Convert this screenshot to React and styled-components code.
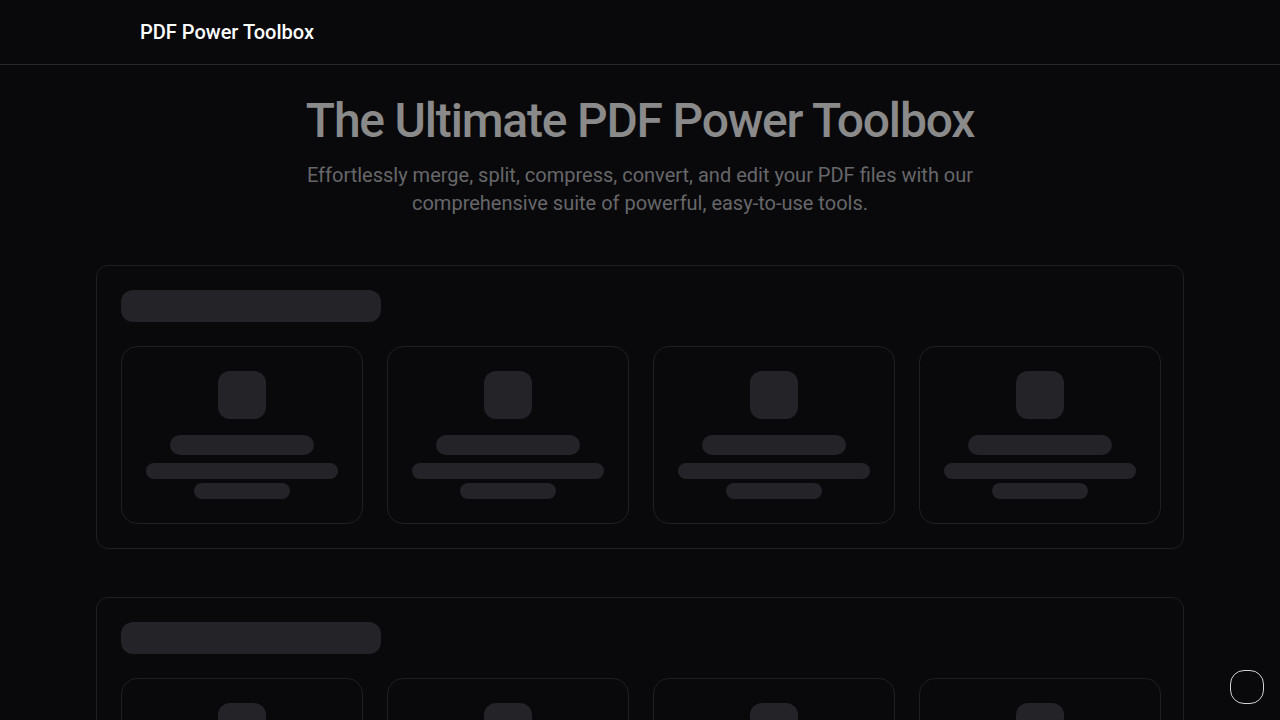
import React from 'react';
import styled, { createGlobalStyle } from 'styled-components';

const GlobalStyle = createGlobalStyle`
  * { box-sizing: border-box; }
  body {
    margin: 0;
    background: #09090b;
    color: #fafafa;
    font-family: Roboto, "Liberation Sans", sans-serif;
  }
`;

const sections = [0, 1, 2];
const tools = [0, 1, 2, 3];

export default function App() {
  return (
    <>
      <GlobalStyle />
      <Page>
        <Header>
          <HeaderInner>
            <Brand>PDF Power Toolbox</Brand>
          </HeaderInner>
        </Header>
        <Main>
          <Hero>
            <Title>The Ultimate PDF Power Toolbox</Title>
            <Lead>
              Effortlessly merge, split, compress, convert, and edit your PDF files with our
              comprehensive suite of powerful, easy-to-use tools.
            </Lead>
          </Hero>
          <Sections>
            {sections.map((s) => (
              <Section key={s}>
                <Skeleton w={260} h={32} r={12} />
                <Grid>
                  {tools.map((t) => (
                    <ToolCard key={t}>
                      <Skeleton w={48} h={48} r={12} />
                      <Skeleton w={144} h={20} r={999} mt={16} />
                      <Skeleton w={192} h={16} r={999} mt={8} />
                      <Skeleton w={96} h={16} r={999} mt={4} />
                    </ToolCard>
                  ))}
                </Grid>
              </Section>
            ))}
          </Sections>
        </Main>
        <FloatButton aria-label="help" />
      </Page>
    </>
  );
}

const Page = styled.div`
  min-height: 100vh;
  background: #09090b;
`;

const Header = styled.header`
  height: 65px;
  border-bottom: 1px solid #27272a;
`;

const HeaderInner = styled.div`
  max-width: 1000px;
  margin: 0 auto;
  height: 100%;
  display: flex;
  align-items: center;
`;

const Brand = styled.div`
  font-size: 20px;
  font-weight: 500;
  color: #ffffff;
`;

const Main = styled.main`
  max-width: 1088px;
  margin: 0 auto;
  padding-top: 28px;
`;

const Hero = styled.section`
  display: flex;
  flex-direction: column;
  align-items: center;
  text-align: center;
  margin-bottom: 48px;
`;

const Title = styled.h1`
  margin: 0;
  font-size: 48px;
  line-height: 56px;
  font-weight: 500;
  letter-spacing: -1.2px;
  color: #8a8a8b;
`;

const Lead = styled.p`
  margin: 12px 0 0;
  max-width: 680px;
  font-size: 20px;
  line-height: 28px;
  color: #67676a;
`;

const Sections = styled.div`
  display: flex;
  flex-direction: column;
  gap: 48px;
`;

const Section = styled.section`
  border: 1px solid #1f1f23;
  border-radius: 12px;
  padding: 24px;
  display: flex;
  flex-direction: column;
  gap: 24px;
`;

const Grid = styled.div`
  display: grid;
  grid-template-columns: repeat(4, 1fr);
  gap: 24px;
`;

const ToolCard = styled.div`
  border: 1px solid #1f1f23;
  border-radius: 16px;
  padding: 24px;
  display: flex;
  flex-direction: column;
  align-items: center;
`;

const Skeleton = styled.div`
  width: ${(p) => p.w}px;
  height: ${(p) => p.h}px;
  border-radius: ${(p) => p.r}px;
  margin-top: ${(p) => p.mt || 0}px;
  background: #242428;
  flex-shrink: 0;
`;

const FloatButton = styled.button`
  position: fixed;
  right: 16px;
  bottom: 16px;
  width: 34px;
  height: 34px;
  border-radius: 14px;
  border: 1px solid #d4d4d8;
  background: #09090b;
  padding: 0;
`;
